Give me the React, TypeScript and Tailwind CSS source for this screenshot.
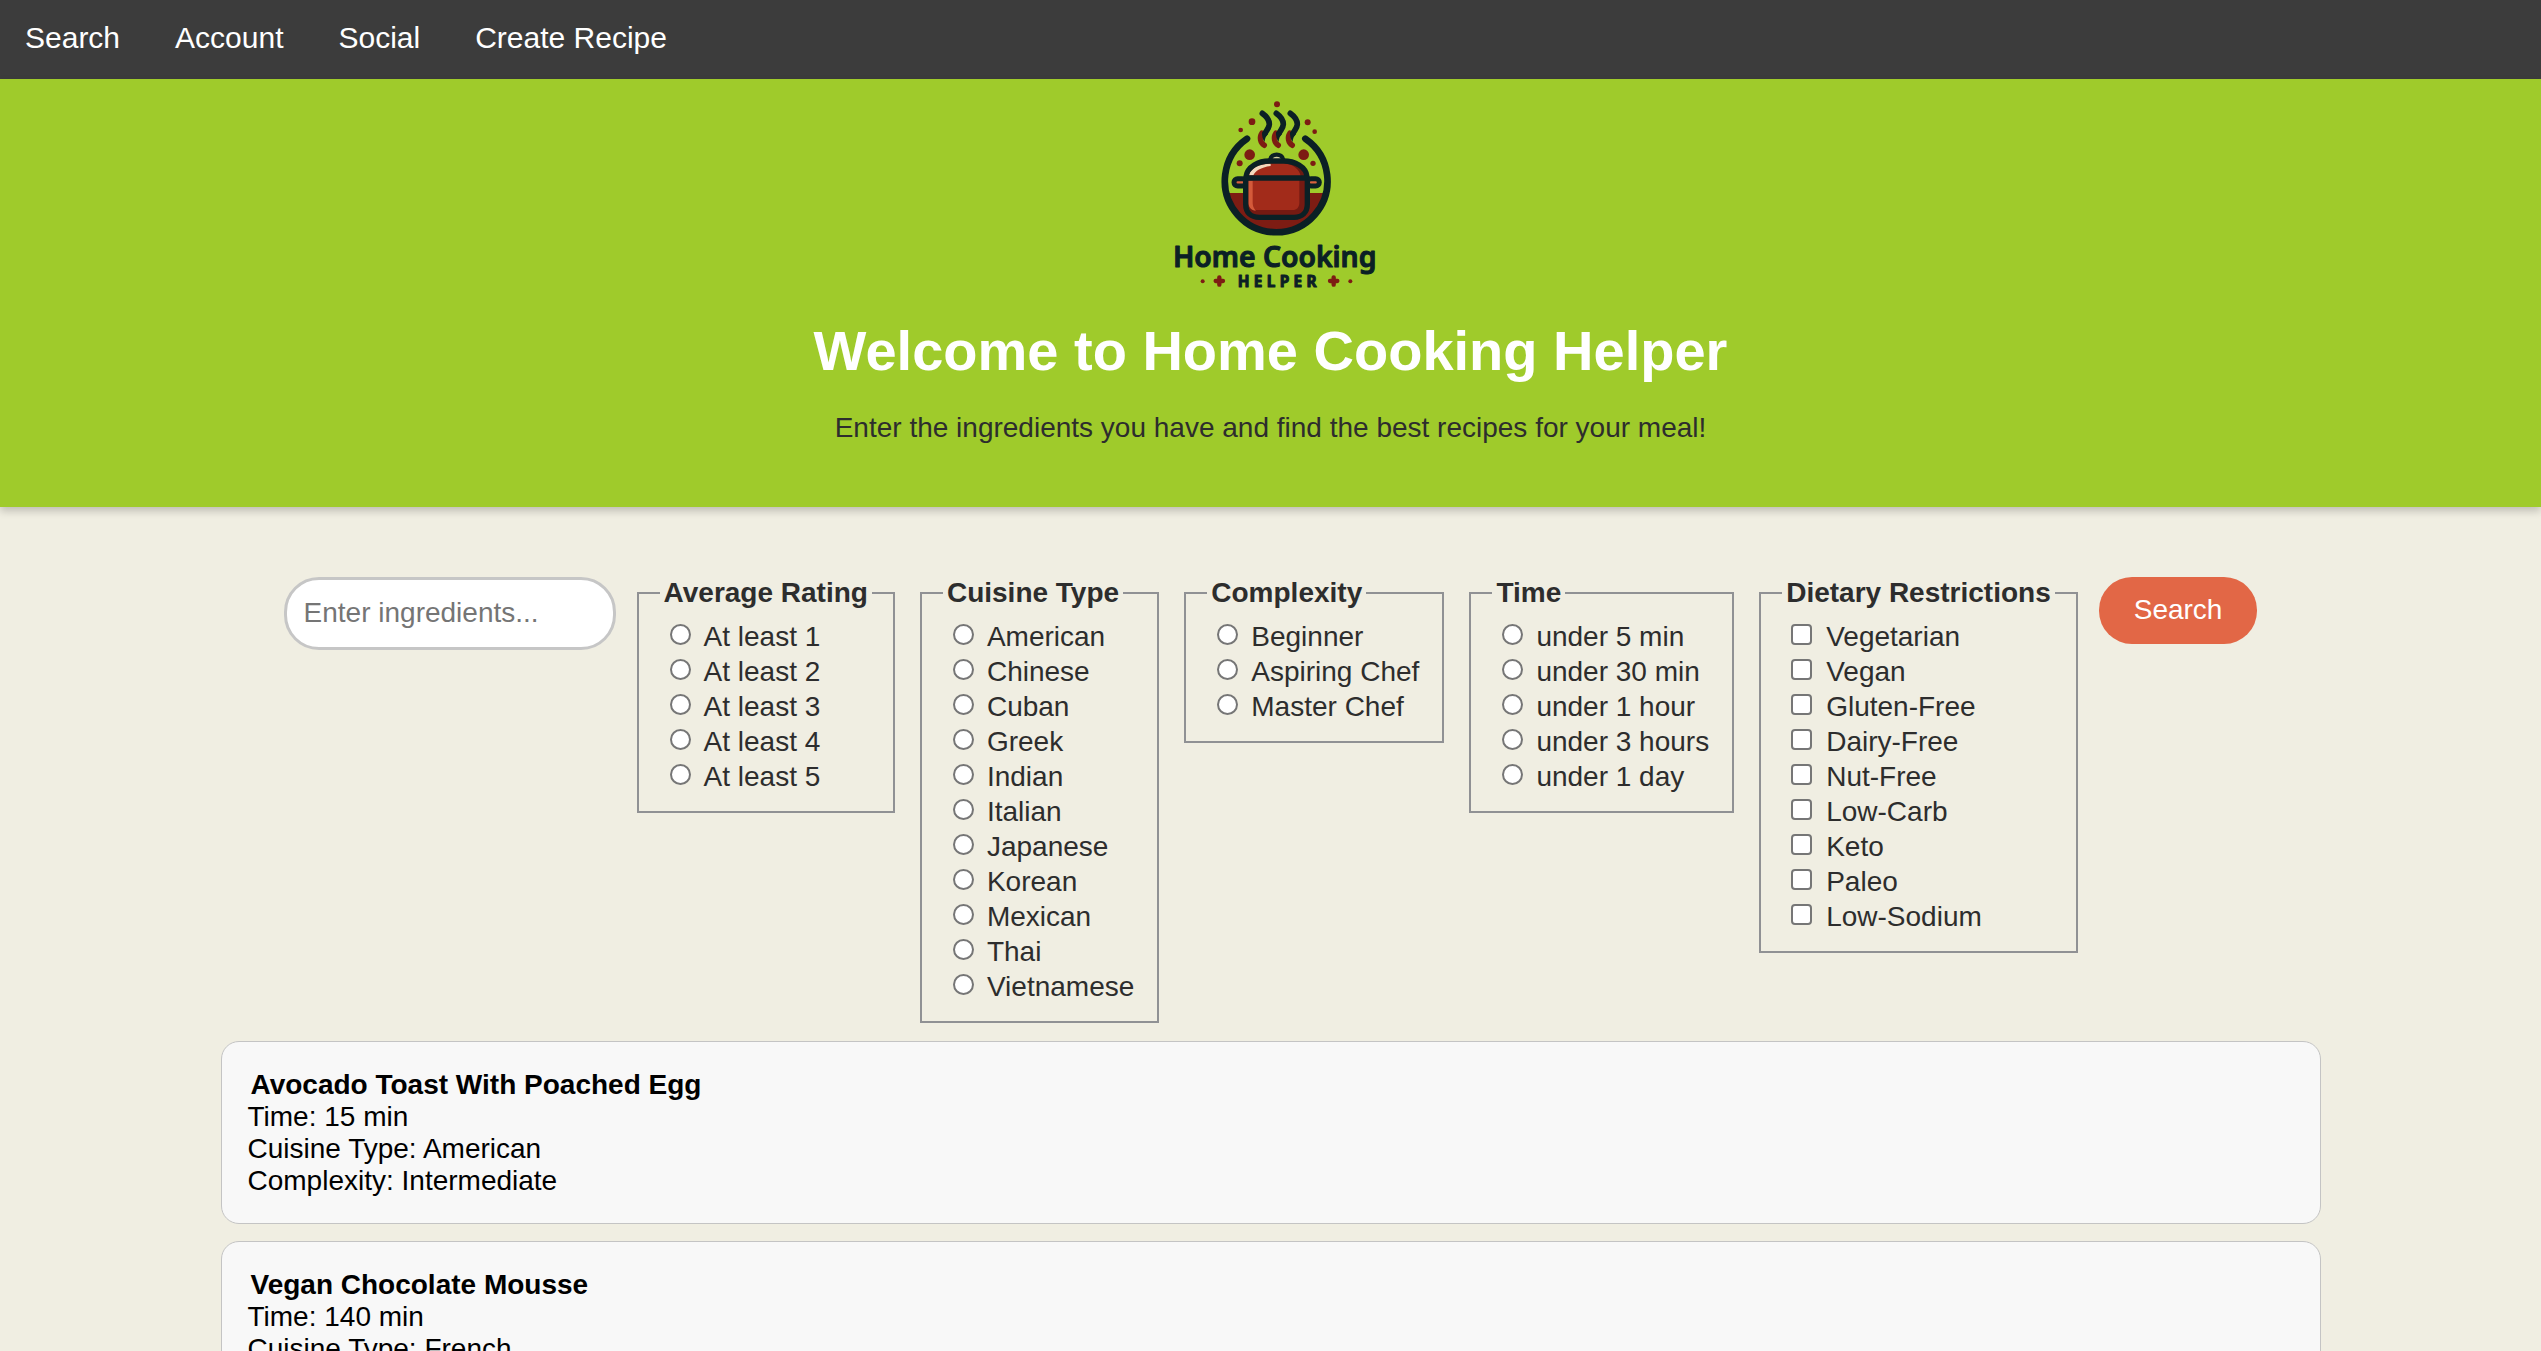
import { useState } from "react";

const NAV_LINKS = ["Search", "Account", "Social", "Create Recipe"];

type Group = {
  name: string;
  title: string;
  kind: "radio" | "checkbox";
  options: string[];
};

const GROUPS: Group[] = [
  {
    name: "rating",
    title: "Average Rating",
    kind: "radio",
    options: ["At least 1", "At least 2", "At least 3", "At least 4", "At least 5"],
  },
  {
    name: "cuisine",
    title: "Cuisine Type",
    kind: "radio",
    options: [
      "American",
      "Chinese",
      "Cuban",
      "Greek",
      "Indian",
      "Italian",
      "Japanese",
      "Korean",
      "Mexican",
      "Thai",
      "Vietnamese",
    ],
  },
  {
    name: "complexity",
    title: "Complexity",
    kind: "radio",
    options: ["Beginner", "Aspiring Chef", "Master Chef"],
  },
  {
    name: "time",
    title: "Time",
    kind: "radio",
    options: ["under 5 min", "under 30 min", "under 1 hour", "under 3 hours", "under 1 day"],
  },
  {
    name: "diet",
    title: "Dietary Restrictions",
    kind: "checkbox",
    options: [
      "Vegetarian",
      "Vegan",
      "Gluten-Free",
      "Dairy-Free",
      "Nut-Free",
      "Low-Carb",
      "Keto",
      "Paleo",
      "Low-Sodium",
    ],
  },
];

const RECIPES = [
  { title: "Avocado Toast With Poached Egg", time: "15 min", cuisine: "American", complexity: "Intermediate" },
  { title: "Vegan Chocolate Mousse", time: "140 min", cuisine: "French", complexity: "Beginner" },
];

function Logo() {
  const ink = "#0b2025";
  const red = "#7d1c13";
  return (
    <svg viewBox="-12 0 750 630" className="h-[210px] w-[250px]" role="img" aria-label="Home Cooking Helper logo">
      {/* bowl fill behind the pot */}
      <path d="M234 309H526A150 150 0 0 1 234 309Z" fill={red} />
      {/* open ring */}
      <path d="M291 146A154 154 0 1 0 466 146" fill="none" stroke={ink} strokeWidth="20" strokeLinecap="round" />
      {/* steam: red tails under dark curls */}
      {[0, 42, 84].map((dx) => (
        <g key={dx} transform={`translate(${dx} 0)`} strokeLinecap="round">
          <path d="M336 129C327 143 331 158 343 166" fill="none" stroke={red} strokeWidth="16" />
          <path d="M337 70C351 80 358 91 358 103C358 114 349 121 345 130" fill="none" stroke={ink} strokeWidth="17" />
          <path d="M337 126C335 138 338 149 344 156C344 146 348 139 354 132Z" fill={ink} />
        </g>
      ))}
      <g fill={red}>
        <circle cx="381" cy="43" r="9" />
        <circle cx="306" cy="95" r="10" />
        <circle cx="272" cy="120" r="7" />
        <circle cx="473" cy="97" r="9" />
        <circle cx="494" cy="125" r="7" />
        <circle cx="299" cy="194" r="16" />
        <circle cx="461" cy="194" r="16" />
        <circle cx="269" cy="220" r="9" />
        <circle cx="489" cy="220" r="8" />
      </g>
      {/* handles */}
      <rect x="252" y="266" width="36" height="22" rx="11" fill="#d9603d" stroke={ink} strokeWidth="15" />
      <rect x="472" y="266" width="36" height="22" rx="11" fill="#d9603d" stroke={ink} strokeWidth="15" />
      {/* lid */}
      <path d="M361 208C363 189 397 189 399 208" fill="#d8d3a0" stroke={ink} strokeWidth="13" />
      <path d="M288 260C292 230 326 213 358 213H400C434 213 468 230 471 260Z" fill="#a22b1a" />
      <path d="M400 217C440 219 462 236 464 258H452C448 238 430 224 400 217Z" fill="#6d1a12" />
      <path d="M297 256C302 232 330 221 362 221V228C332 232 316 243 310 256Z" fill="#f3d9bd" />
      <path d="M288 260C292 230 326 213 358 213H400C434 213 468 230 471 260" fill="none" stroke={ink} strokeWidth="16" />
      {/* body */}
      <path d="M287 266H472V342C472 368 456 382 432 382H328C302 382 287 368 287 342Z" fill="#751a12" />
      <path d="M295 270H448V338C448 352 440 360 428 360H318C304 360 295 350 295 336Z" fill="#a22b1a" />
      <path d="M295 272H308V336C308 350 312 356 318 362C304 362 295 352 295 336Z" fill="#d45a3a" />
      <path
        d="M287 264H472V342C472 368 456 382 432 382H328C302 382 287 368 287 342Z"
        fill="none"
        stroke={ink}
        strokeWidth="16"
        strokeLinejoin="round"
      />
      {/* wordmark */}
      <g
        fill={ink}
        stroke={ink}
        strokeLinejoin="round"
        textAnchor="middle"
        className="font-['Noto_Sans',sans-serif]"
      >
        <text x="374" y="530" fontSize="85" strokeWidth="3" className="font-semibold">
          Home Cooking
        </text>
        <text x="388" y="591" fontSize="46" strokeWidth="3" letterSpacing="13" className="font-bold">
          HELPER
        </text>
      </g>
      <g fill={red}>
        <circle cx="158" cy="574" r="6" />
        <circle cx="601" cy="574" r="6" />
      </g>
      <path
        d="M197 573H219M208 562V584M540 573H562M551 562V584"
        stroke={red}
        strokeWidth="13"
        strokeLinecap="round"
      />
    </svg>
  );
}

function Option({ group, label }: { group: Group; label: string }) {
  const id = `${group.name}-${label.toLowerCase().replace(/\s+/g, "-")}`;
  const radio = group.kind === "radio";
  return (
    <li className="flex h-[35px] items-center">
      <input
        id={id}
        type={group.kind}
        name={group.name}
        value={label}
        className={
          radio
            ? "mr-[13px] mb-1 ml-[10px] size-[21px] shrink-0 appearance-none rounded-full border-2 border-[#767676] bg-white checked:bg-[#0075ff]"
            : "mr-[14px] mb-1 ml-[9px] size-[21px] shrink-0 appearance-none rounded-[4px] border-2 border-[#767676] bg-white checked:bg-[#0075ff]"
        }
      />
      <label htmlFor={id} className="whitespace-nowrap">
        {label}
      </label>
    </li>
  );
}

export default function App() {
  const [query, setQuery] = useState("");
  return (
    <div className="min-h-screen bg-[#f0eee2] font-['Liberation_Sans',Arial,sans-serif] text-[28px] leading-[35px] text-[#2d2d2d]">
      <nav className="bg-[#3c3c3c] px-[25px] pt-[21px] pb-6">
        <ul className="flex gap-[55px]">
          {NAV_LINKS.map((link) => (
            <li key={link}>
              <a href="#" className="block text-[30px] leading-[34px] text-white">
                {link}
              </a>
            </li>
          ))}
        </ul>
      </nav>

      <header className="flex flex-col items-center bg-[#9fcb2b] pt-[11px] pb-[62px] text-center shadow-[0_4px_8px_rgba(0,0,0,0.2)]">
        <Logo />
        <h1 className="mt-[19px] text-[56px] leading-[64px] font-bold text-white">Welcome to Home Cooking Helper</h1>
        <p className="mt-[27px]">Enter the ingredients you have and find the best recipes for your meal!</p>
      </header>

      <main className="mx-auto max-w-[2100px]">
        <form
          className="flex items-start justify-center gap-[21px] pt-[68px] pb-[18px]"
          onSubmit={(event) => event.preventDefault()}
        >
          <input
            type="text"
            aria-label="Ingredients"
            placeholder="Enter ingredients..."
            value={query}
            onChange={(event) => setQuery(event.target.value)}
            className="mt-[2px] h-[73px] w-[332px] rounded-[35px] border-[3px] border-[#c6c6c6] bg-white px-[17px] pb-[2px] placeholder:text-[#757575]"
          />
          <div className="flex items-start gap-[25px]">
            {GROUPS.map((group) => (
              <fieldset key={group.name} className="border-2 border-[#909194] px-[21px] pb-[17px]">
                <legend className="px-1 font-bold whitespace-nowrap">{group.title}</legend>
                <ul className="pt-[9px] pr-[2px]">
                  {group.options.map((label) => (
                    <Option key={label} group={group} label={label} />
                  ))}
                </ul>
              </fieldset>
            ))}
          </div>
          <button type="submit" className="mt-[2px] h-[67px] rounded-[33px] bg-[#e26746] px-[35px] pb-[2px] text-white">
            Search
          </button>
        </form>

        <section aria-label="Recipes" className="flex flex-col gap-[17px] leading-[32px] text-black">
          {RECIPES.map((recipe) => (
            <article key={recipe.title} className="rounded-[18px] border border-[#c4c4c4] bg-[#f8f8f8] px-[26px] pt-[27px] pb-[26px]">
              <h2 className="ml-[3px] font-bold">{recipe.title}</h2>
              <p>Time: {recipe.time}</p>
              <p>Cuisine Type: {recipe.cuisine}</p>
              <p>Complexity: {recipe.complexity}</p>
            </article>
          ))}
        </section>
      </main>
    </div>
  );
}
